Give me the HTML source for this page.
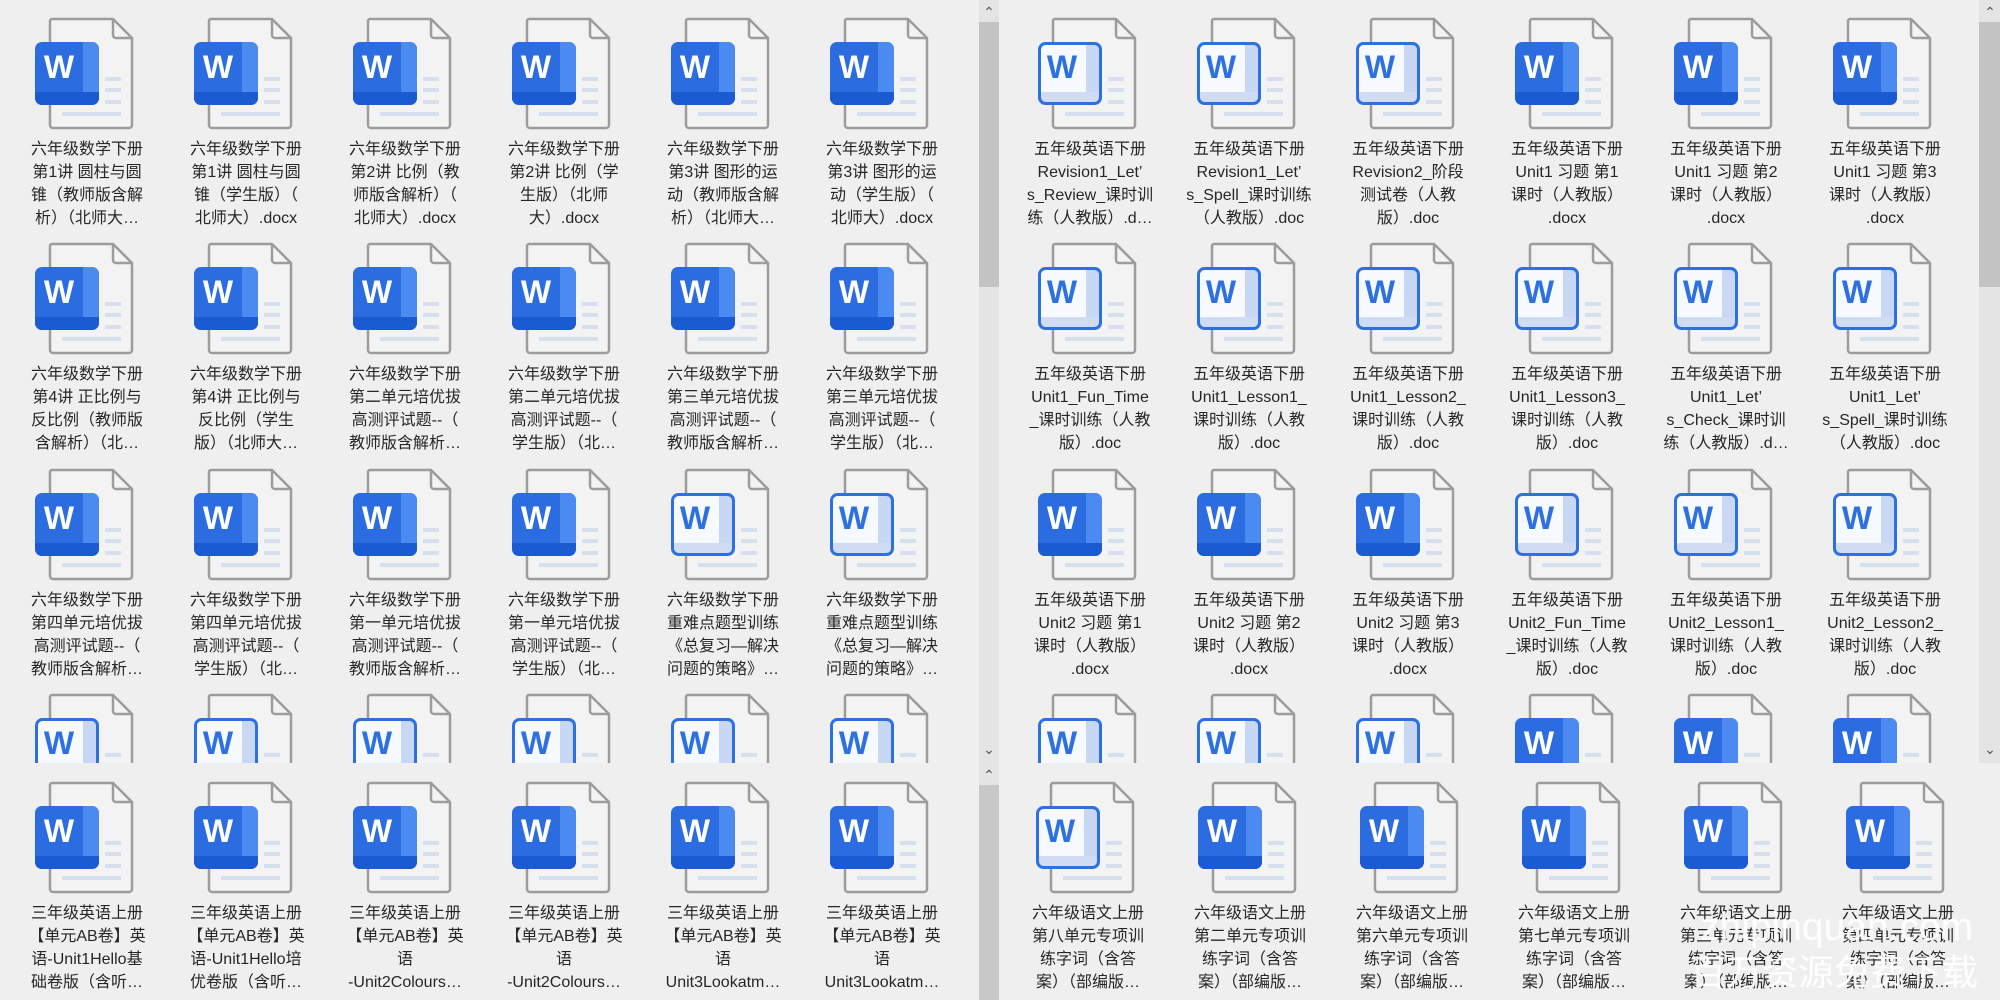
<!DOCTYPE html>
<html><head><meta charset="utf-8"><style>
*{margin:0;padding:0;box-sizing:border-box}
body{width:2000px;height:1000px;background:#efefef;position:relative;overflow:hidden;font-family:"Liberation Sans","Noto Sans CJK SC",sans-serif;color:#262626}
.pn{position:absolute;overflow:hidden}
.it{position:absolute;width:160px;height:225px}
.it svg{position:absolute;left:28px;top:16px;width:100px;height:115px}
.it p{position:absolute;left:0;top:138px;width:160px;text-align:center;font-size:16px;line-height:23px;white-space:nowrap}
.sb{position:absolute;background:#e4e4e4}
.th{position:absolute;background:#c3c3c3}
.ch{position:absolute;font-size:14px;color:#555;line-height:14px;text-align:center;width:20px}
.wm{position:absolute;color:rgba(255,255,255,.92);white-space:nowrap}
</style></head><body>
<svg width="0" height="0" style="position:absolute">
<defs>
<clipPath id="cq"><rect x="0" y="26" width="64" height="63" rx="7"/></clipPath>
<symbol id="pg" viewBox="0 0 100 115">
<path d="M17 3H78L97 22V109a3 3 0 0 1-3 3H18a3 3 0 0 1-3-3V5a2 2 0 0 1 2-2Z" fill="#f3f3f3" stroke="#9c9c9c" stroke-width="2.5"/>
<path d="M78 3V19a3 3 0 0 0 3 3H97" fill="none" stroke="#9c9c9c" stroke-width="2.5"/>
<rect x="70" y="61" width="16" height="4" fill="#d6dfee"/><rect x="70" y="72" width="16" height="4" fill="#d6dfee"/><rect x="70" y="84" width="16" height="4" fill="#d6dfee"/><rect x="27" y="96" width="59" height="4" fill="#d6dfee"/>
</symbol>
<symbol id="A" viewBox="0 0 100 115">
<use href="#pg"/>
<g clip-path="url(#cq)"><rect x="0" y="26" width="64" height="63" fill="#2b6de1"/><rect x="48" y="26" width="16" height="63" fill="#4a8af1"/><rect x="0" y="76" width="64" height="13" fill="#1b5bd1"/></g>
<text x="24" y="62" text-anchor="middle" font-family="Liberation Sans" font-weight="bold" font-size="32" fill="#fff">W</text>
</symbol>
<symbol id="B" viewBox="0 0 100 115">
<use href="#pg"/>
<g clip-path="url(#cq)"><rect x="0" y="26" width="64" height="63" fill="#f6f9fe"/><rect x="48" y="26" width="16" height="63" fill="#c8d8f4"/><rect x="0" y="76" width="64" height="13" fill="#cfdcf4"/></g>
<rect x="1.5" y="27.5" width="61" height="60" rx="6" fill="none" stroke="#2d70e1" stroke-width="3"/>
<text x="24" y="62" text-anchor="middle" font-family="Liberation Sans" font-weight="bold" font-size="32" fill="#2d70e1">W</text>
</symbol>
</defs></svg>

<!-- top-left -->
<div class="pn" style="left:0;top:0;width:979px;height:763px">
<div class="it" style="left:7px;top:0"><svg><use href="#A"/></svg><p>六年级数学下册<br>第1讲 圆柱与圆<br>锥（教师版含解<br>析）（北师大…</p></div>
<div class="it" style="left:166px;top:0"><svg><use href="#A"/></svg><p>六年级数学下册<br>第1讲 圆柱与圆<br>锥（学生版）（<br>北师大）.docx</p></div>
<div class="it" style="left:325px;top:0"><svg><use href="#A"/></svg><p>六年级数学下册<br>第2讲 比例（教<br>师版含解析）（<br>北师大）.docx</p></div>
<div class="it" style="left:484px;top:0"><svg><use href="#A"/></svg><p>六年级数学下册<br>第2讲 比例（学<br>生版）（北师<br>大）.docx</p></div>
<div class="it" style="left:643px;top:0"><svg><use href="#A"/></svg><p>六年级数学下册<br>第3讲 图形的运<br>动（教师版含解<br>析）（北师大…</p></div>
<div class="it" style="left:802px;top:0"><svg><use href="#A"/></svg><p>六年级数学下册<br>第3讲 图形的运<br>动（学生版）（<br>北师大）.docx</p></div>

<div class="it" style="left:7px;top:225px"><svg><use href="#A"/></svg><p>六年级数学下册<br>第4讲 正比例与<br>反比例（教师版<br>含解析）（北…</p></div>
<div class="it" style="left:166px;top:225px"><svg><use href="#A"/></svg><p>六年级数学下册<br>第4讲 正比例与<br>反比例（学生<br>版）（北师大…</p></div>
<div class="it" style="left:325px;top:225px"><svg><use href="#A"/></svg><p>六年级数学下册<br>第二单元培优拔<br>高测评试题--（<br>教师版含解析…</p></div>
<div class="it" style="left:484px;top:225px"><svg><use href="#A"/></svg><p>六年级数学下册<br>第二单元培优拔<br>高测评试题--（<br>学生版）（北…</p></div>
<div class="it" style="left:643px;top:225px"><svg><use href="#A"/></svg><p>六年级数学下册<br>第三单元培优拔<br>高测评试题--（<br>教师版含解析…</p></div>
<div class="it" style="left:802px;top:225px"><svg><use href="#A"/></svg><p>六年级数学下册<br>第三单元培优拔<br>高测评试题--（<br>学生版）（北…</p></div>

<div class="it" style="left:7px;top:451px"><svg><use href="#A"/></svg><p>六年级数学下册<br>第四单元培优拔<br>高测评试题--（<br>教师版含解析…</p></div>
<div class="it" style="left:166px;top:451px"><svg><use href="#A"/></svg><p>六年级数学下册<br>第四单元培优拔<br>高测评试题--（<br>学生版）（北…</p></div>
<div class="it" style="left:325px;top:451px"><svg><use href="#A"/></svg><p>六年级数学下册<br>第一单元培优拔<br>高测评试题--（<br>教师版含解析…</p></div>
<div class="it" style="left:484px;top:451px"><svg><use href="#A"/></svg><p>六年级数学下册<br>第一单元培优拔<br>高测评试题--（<br>学生版）（北…</p></div>
<div class="it" style="left:643px;top:451px"><svg><use href="#B"/></svg><p>六年级数学下册<br>重难点题型训练<br>《总复习—解决<br>问题的策略》…</p></div>
<div class="it" style="left:802px;top:451px"><svg><use href="#B"/></svg><p>六年级数学下册<br>重难点题型训练<br>《总复习—解决<br>问题的策略》…</p></div>

<div class="it" style="left:7px;top:676px"><svg><use href="#B"/></svg></div>
<div class="it" style="left:166px;top:676px"><svg><use href="#B"/></svg></div>
<div class="it" style="left:325px;top:676px"><svg><use href="#B"/></svg></div>
<div class="it" style="left:484px;top:676px"><svg><use href="#B"/></svg></div>
<div class="it" style="left:643px;top:676px"><svg><use href="#B"/></svg></div>
<div class="it" style="left:802px;top:676px"><svg><use href="#B"/></svg></div>
</div>

<!-- top-right -->
<div class="pn" style="left:1000px;top:0;width:979px;height:763px">
<div class="it" style="left:10px;top:0"><svg><use href="#B"/></svg><p>五年级英语下册<br>Revision1_Let’<br>s_Review_课时训<br>练（人教版）.d…</p></div>
<div class="it" style="left:169px;top:0"><svg><use href="#B"/></svg><p>五年级英语下册<br>Revision1_Let’<br>s_Spell_课时训练<br>（人教版）.doc</p></div>
<div class="it" style="left:328px;top:0"><svg><use href="#B"/></svg><p>五年级英语下册<br>Revision2_阶段<br>测试卷（人教<br>版）.doc</p></div>
<div class="it" style="left:487px;top:0"><svg><use href="#A"/></svg><p>五年级英语下册<br>Unit1 习题 第1<br>课时（人教版）<br>.docx</p></div>
<div class="it" style="left:646px;top:0"><svg><use href="#A"/></svg><p>五年级英语下册<br>Unit1 习题 第2<br>课时（人教版）<br>.docx</p></div>
<div class="it" style="left:805px;top:0"><svg><use href="#A"/></svg><p>五年级英语下册<br>Unit1 习题 第3<br>课时（人教版）<br>.docx</p></div>

<div class="it" style="left:10px;top:225px"><svg><use href="#B"/></svg><p>五年级英语下册<br>Unit1_Fun_Time<br>_课时训练（人教<br>版）.doc</p></div>
<div class="it" style="left:169px;top:225px"><svg><use href="#B"/></svg><p>五年级英语下册<br>Unit1_Lesson1_<br>课时训练（人教<br>版）.doc</p></div>
<div class="it" style="left:328px;top:225px"><svg><use href="#B"/></svg><p>五年级英语下册<br>Unit1_Lesson2_<br>课时训练（人教<br>版）.doc</p></div>
<div class="it" style="left:487px;top:225px"><svg><use href="#B"/></svg><p>五年级英语下册<br>Unit1_Lesson3_<br>课时训练（人教<br>版）.doc</p></div>
<div class="it" style="left:646px;top:225px"><svg><use href="#B"/></svg><p>五年级英语下册<br>Unit1_Let’<br>s_Check_课时训<br>练（人教版）.d…</p></div>
<div class="it" style="left:805px;top:225px"><svg><use href="#B"/></svg><p>五年级英语下册<br>Unit1_Let’<br>s_Spell_课时训练<br>（人教版）.doc</p></div>

<div class="it" style="left:10px;top:451px"><svg><use href="#A"/></svg><p>五年级英语下册<br>Unit2 习题 第1<br>课时（人教版）<br>.docx</p></div>
<div class="it" style="left:169px;top:451px"><svg><use href="#A"/></svg><p>五年级英语下册<br>Unit2 习题 第2<br>课时（人教版）<br>.docx</p></div>
<div class="it" style="left:328px;top:451px"><svg><use href="#A"/></svg><p>五年级英语下册<br>Unit2 习题 第3<br>课时（人教版）<br>.docx</p></div>
<div class="it" style="left:487px;top:451px"><svg><use href="#B"/></svg><p>五年级英语下册<br>Unit2_Fun_Time<br>_课时训练（人教<br>版）.doc</p></div>
<div class="it" style="left:646px;top:451px"><svg><use href="#B"/></svg><p>五年级英语下册<br>Unit2_Lesson1_<br>课时训练（人教<br>版）.doc</p></div>
<div class="it" style="left:805px;top:451px"><svg><use href="#B"/></svg><p>五年级英语下册<br>Unit2_Lesson2_<br>课时训练（人教<br>版）.doc</p></div>

<div class="it" style="left:10px;top:676px"><svg><use href="#B"/></svg></div>
<div class="it" style="left:169px;top:676px"><svg><use href="#B"/></svg></div>
<div class="it" style="left:328px;top:676px"><svg><use href="#B"/></svg></div>
<div class="it" style="left:487px;top:676px"><svg><use href="#A"/></svg></div>
<div class="it" style="left:646px;top:676px"><svg><use href="#A"/></svg></div>
<div class="it" style="left:805px;top:676px"><svg><use href="#A"/></svg></div>
</div>

<!-- bottom-left -->
<div class="pn" style="left:0;top:764px;width:979px;height:236px">
<div class="it" style="left:7px;top:0"><svg><use href="#A"/></svg><p>三年级英语上册<br>【单元AB卷】英<br>语-Unit1Hello基<br>础卷版（含听…</p></div>
<div class="it" style="left:166px;top:0"><svg><use href="#A"/></svg><p>三年级英语上册<br>【单元AB卷】英<br>语-Unit1Hello培<br>优卷版（含听…</p></div>
<div class="it" style="left:325px;top:0"><svg><use href="#A"/></svg><p>三年级英语上册<br>【单元AB卷】英<br>语<br>-Unit2Colours…</p></div>
<div class="it" style="left:484px;top:0"><svg><use href="#A"/></svg><p>三年级英语上册<br>【单元AB卷】英<br>语<br>-Unit2Colours…</p></div>
<div class="it" style="left:643px;top:0"><svg><use href="#A"/></svg><p>三年级英语上册<br>【单元AB卷】英<br>语<br>Unit3Lookatm…</p></div>
<div class="it" style="left:802px;top:0"><svg><use href="#A"/></svg><p>三年级英语上册<br>【单元AB卷】英<br>语<br>Unit3Lookatm…</p></div>
</div>

<!-- bottom-right -->
<div class="pn" style="left:1000px;top:764px;width:1000px;height:236px">
<div class="it" style="left:8px;top:0"><svg><use href="#B"/></svg><p>六年级语文上册<br>第八单元专项训<br>练字词（含答<br>案）（部编版…</p></div>
<div class="it" style="left:170px;top:0"><svg><use href="#A"/></svg><p>六年级语文上册<br>第二单元专项训<br>练字词（含答<br>案）（部编版…</p></div>
<div class="it" style="left:332px;top:0"><svg><use href="#A"/></svg><p>六年级语文上册<br>第六单元专项训<br>练字词（含答<br>案）（部编版…</p></div>
<div class="it" style="left:494px;top:0"><svg><use href="#A"/></svg><p>六年级语文上册<br>第七单元专项训<br>练字词（含答<br>案）（部编版…</p></div>
<div class="it" style="left:656px;top:0"><svg><use href="#A"/></svg><p>六年级语文上册<br>第三单元专项训<br>练字词（含答<br>案）（部编版…</p></div>
<div class="it" style="left:818px;top:0"><svg><use href="#A"/></svg><p>六年级语文上册<br>第四单元专项训<br>练字词（含答<br>案）（部编版…</p></div>
</div>

<!-- scrollbars -->
<div class="sb" style="left:979px;top:0;width:20px;height:763px"></div>
<div class="th" style="left:979px;top:22px;width:20px;height:265px"></div>
<div class="ch" style="left:979px;top:5px">⌃</div>
<div class="ch" style="left:979px;top:742px">⌄</div>
<div class="sb" style="left:979px;top:763px;width:20px;height:237px"></div>
<div class="ch" style="left:979px;top:768px">⌃</div>
<div class="th" style="left:979px;top:785px;width:20px;height:215px;background:#c8c8c8"></div>

<div class="sb" style="left:1979px;top:0;width:21px;height:763px"></div>
<div class="th" style="left:1979px;top:22px;width:21px;height:265px"></div>
<div class="ch" style="left:1980px;top:5px">⌃</div>
<div class="ch" style="left:1980px;top:742px">⌄</div>

<div class="wm" style="left:1700px;top:903px;font-size:39px;line-height:50px">zhipinquan.com</div>
<div class="wm" style="left:1690px;top:952px;font-size:36px;line-height:42px;font-family:'Liberation Sans','Noto Sans CJK SC',sans-serif">百万资源免费下载</div>
</body></html>
